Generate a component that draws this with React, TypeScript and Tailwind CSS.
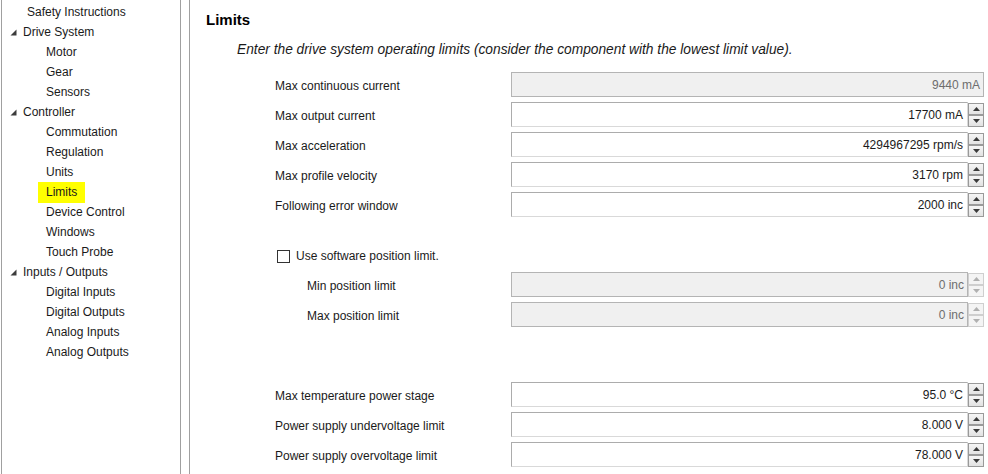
import React from "react";

type TreeItem = { label: string; level: number; expanded?: boolean; selected?: boolean };

const tree: TreeItem[] = [
  { label: "Safety Instructions", level: 0 },
  { label: "Drive System", level: 0, expanded: true },
  { label: "Motor", level: 1 },
  { label: "Gear", level: 1 },
  { label: "Sensors", level: 1 },
  { label: "Controller", level: 0, expanded: true },
  { label: "Commutation", level: 1 },
  { label: "Regulation", level: 1 },
  { label: "Units", level: 1 },
  { label: "Limits", level: 1, selected: true },
  { label: "Device Control", level: 1 },
  { label: "Windows", level: 1 },
  { label: "Touch Probe", level: 1 },
  { label: "Inputs / Outputs", level: 0, expanded: true },
  { label: "Digital Inputs", level: 1 },
  { label: "Digital Outputs", level: 1 },
  { label: "Analog Inputs", level: 1 },
  { label: "Analog Outputs", level: 1 },
];

const font = { fontFamily: '"Liberation Sans", Arial, sans-serif' };

function Expander() {
  return (
    <svg width="7" height="7" viewBox="0 0 7 7" className="mr-[6px]">
      <path d="M6.5 0.5 L6.5 6.5 L0.5 6.5 Z" fill="#3c3c3c" />
    </svg>
  );
}

function Sidebar() {
  return (
    <div className="w-[180px] h-full border-l border-r border-[#a0a0a0] pt-[2px] shrink-0">
      {tree.map((t) => (
        <div key={t.label} className="h-[20px] flex items-center">
          {t.level === 0 ? (
            t.expanded ? (
              <div className="flex items-center pl-[8px]">
                <Expander />
                <span className="text-[12px] text-[#1a1a1a]">{t.label}</span>
              </div>
            ) : (
              <span className="pl-[25px] text-[12px] text-[#1a1a1a]">{t.label}</span>
            )
          ) : (
            <span
              className={
                t.selected
                  ? "ml-[36px] px-[8px] h-[21px] leading-[21px] bg-[#ffff00] text-[12px] text-[#1a1a1a]"
                  : "pl-[44px] text-[12px] text-[#1a1a1a]"
              }
            >
              {t.label}
            </span>
          )}
        </div>
      ))}
    </div>
  );
}

function Arrow({ up, disabled }: { up?: boolean; disabled?: boolean }) {
  return (
    <div
      className={
        disabled
          ? "h-[12px] flex items-center justify-center border border-[#cfcfcf] bg-[#f4f4f4]"
          : "h-[12px] flex items-center justify-center border border-[#9a9a9a] bg-gradient-to-b from-[#f6f6f6] to-[#e2e2e2]"
      }
    >
      <svg width="7" height="4" viewBox="0 0 7 4">
        <path
          d={up ? "M0 4 L3.5 0 L7 4 Z" : "M0 0 L3.5 4 L7 0 Z"}
          fill={disabled ? "#b0b0b0" : "#3a3a3a"}
        />
      </svg>
    </div>
  );
}

function Field({
  label,
  value,
  indent,
  disabled,
  spinner = true,
}: {
  label: string;
  value: string;
  indent?: boolean;
  disabled?: boolean;
  spinner?: boolean;
}) {
  return (
    <div className="h-[30px] flex items-center">
      <div
        className={
          indent
            ? "w-[236px] pl-[32px] text-[12px] text-[#1a1a1a]"
            : "w-[236px] text-[12px] text-[#1a1a1a]"
        }
      >
        {label}
      </div>
      <div className="flex h-[25px] w-[473px] self-start mt-[1px]">
        <div
          className={
            disabled
              ? "flex-1 h-full flex items-center justify-end pr-[3px] bg-[#f0f0f0] border border-[#b4b4b4] text-[12px] text-[#6d6d6d]"
              : "flex-1 h-full flex items-center justify-end pr-[4px] bg-white border border-[#acacac] border-b-[#d9d9d9] border-r-[#d9d9d9] text-[12px] text-[#1a1a1a]"
          }
        >
          {value}
        </div>
        {spinner && (
          <div className="w-[16px] flex flex-col pt-[1px]">
            <Arrow up disabled={disabled} />
            <Arrow disabled={disabled} />
          </div>
        )}
      </div>
    </div>
  );
}

export default function App() {
  return (
    <div className="w-[988px] h-[474px] overflow-hidden bg-white flex pl-[1px]" style={font}>
      <Sidebar />
      <div className="w-[8px] shrink-0" />
      <div className="flex-1 h-full border-l border-[#a0a0a0] pl-[16px] pt-[10px]">
        <div className="h-[20px] leading-[20px] text-[15px] font-bold text-black">Limits</div>
        <div className="mt-[10px] h-[20px] leading-[20px] pl-[31px] text-[13.75px] italic text-[#1a1a1a] whitespace-nowrap">
          Enter the drive system operating limits (consider the component with the lowest limit value).
        </div>
        <div className="mt-[11px] pl-[69px]">
          <Field label="Max continuous current" value="9440 mA" disabled spinner={false} />
          <Field label="Max output current" value="17700 mA" />
          <Field label="Max acceleration" value="4294967295 rpm/s" />
          <Field label="Max profile velocity" value="3170 rpm" />
          <Field label="Following error window" value="2000 inc" />

          <div className="mt-[20px] h-[30px] flex items-center pl-[2px]">
            <div className="w-[13px] h-[13px] border border-[#333333] bg-white" />
            <span className="ml-[6px] text-[12px] text-[#1a1a1a]">Use software position limit.</span>
          </div>
          <Field label="Min position limit" value="0 inc" indent disabled />
          <Field label="Max position limit" value="0 inc" indent disabled />

          <div className="mt-[50px]">
            <Field label="Max temperature power stage" value="95.0 °C" />
            <Field label="Power supply undervoltage limit" value="8.000 V" />
            <Field label="Power supply overvoltage limit" value="78.000 V" />
          </div>
        </div>
      </div>
    </div>
  );
}
